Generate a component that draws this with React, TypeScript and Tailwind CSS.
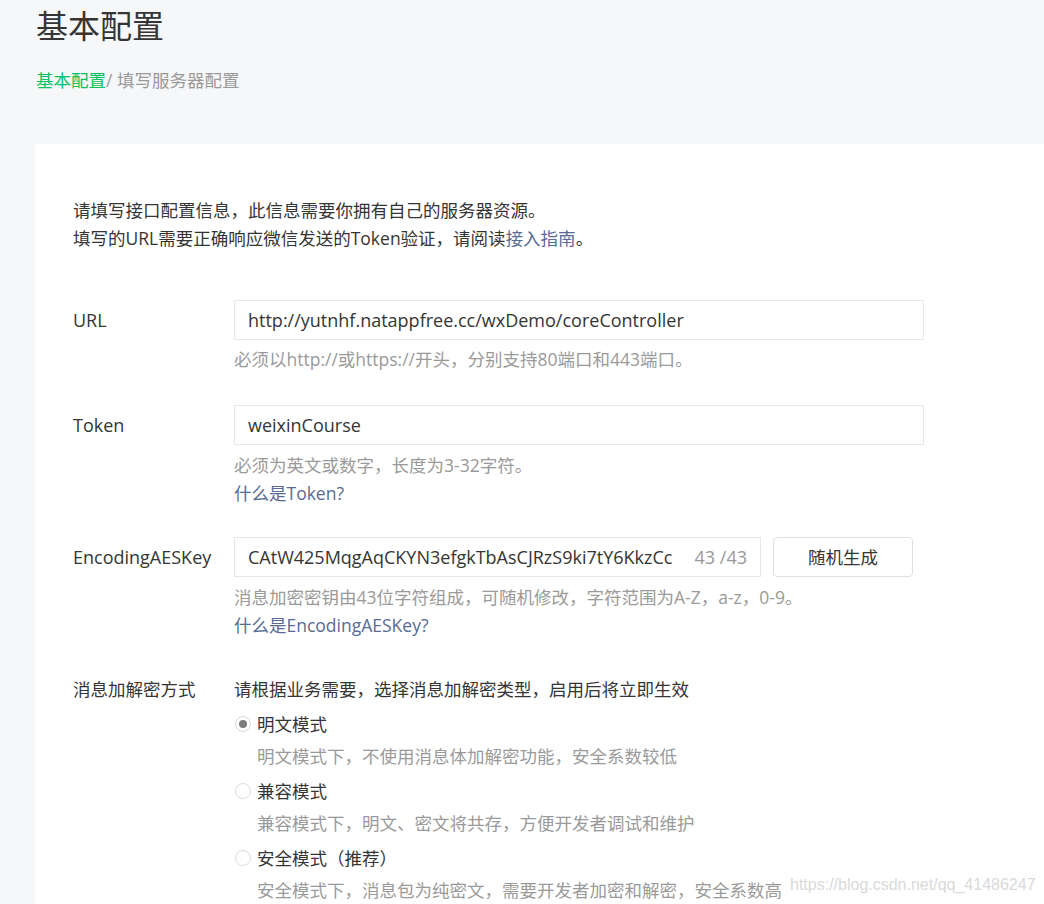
import { useState } from "react";

const font = { fontFamily: '"Open Sans", "Noto Sans CJK SC", sans-serif' };

type RadioOption = {
  label: string;
  desc: string;
};

const options: RadioOption[] = [
  { label: "明文模式", desc: "明文模式下，不使用消息体加解密功能，安全系数较低" },
  { label: "兼容模式", desc: "兼容模式下，明文、密文将共存，方便开发者调试和维护" },
  { label: "安全模式（推荐）", desc: "安全模式下，消息包为纯密文，需要开发者加密和解密，安全系数高" },
];

function Radio({ checked }: { checked: boolean }) {
  return (
    <span className="flex h-4 w-4 shrink-0 items-center justify-center rounded-full border border-[#dcdcdc] bg-white">
      {checked && <span className="h-2 w-2 rounded-full bg-[#7d7d7d]" />}
    </span>
  );
}

export default function App() {
  const [mode, setMode] = useState(0);

  return (
    <div
      className="relative h-[904px] w-full overflow-hidden bg-[#f6f7f9] text-[17.5px] text-[#353535]"
      style={font}
    >
      <div className="pl-9 pt-1">
        <h1 className="text-[32px] font-normal leading-[44px] text-[#353535]">基本配置</h1>
        <div className="mt-[18px] leading-7">
          <span className="text-[#07c160]">基本配置</span>
          <span className="text-[#9a9a9a]">/ 填写服务器配置</span>
        </div>
      </div>

      <div className="ml-[35px] mt-[50px] w-[1100px] rounded bg-white pb-20 pl-[38px] pt-[52px]">
        <div className="leading-7">
          <p>请填写接口配置信息，此信息需要你拥有自己的服务器资源。</p>
          <p>
            填写的URL需要正确响应微信发送的Token验证，请阅读
            <a href="#" className="text-[#576b95]">接入指南</a>。
          </p>
        </div>

        {/* URL */}
        <div className="mt-12 flex">
          <label className="w-[161px] shrink-0 text-[18px] leading-10">URL</label>
          <div>
            <div className="flex h-10 w-[690px] items-center border border-[#e7e7e7] px-[13px] text-[18px]">
              http://yutnhf.natappfree.cc/wxDemo/coreController
            </div>
            <p className="mt-[5px] leading-7 text-[#9a9a9a]">
              必须以http://或https://开头，分别支持80端口和443端口。
            </p>
          </div>
        </div>

        {/* Token */}
        <div className="mt-8 flex">
          <label className="w-[161px] shrink-0 text-[18px] leading-10">Token</label>
          <div>
            <div className="flex h-10 w-[690px] items-center border border-[#e7e7e7] px-[13px] text-[18px]">
              weixinCourse
            </div>
            <p className="mt-[6px] leading-7 text-[#9a9a9a]">必须为英文或数字，长度为3-32字符。</p>
            <a href="#" className="block leading-7 text-[#576b95]">什么是Token?</a>
          </div>
        </div>

        {/* EncodingAESKey */}
        <div className="mt-[30px] flex">
          <label className="w-[161px] shrink-0 text-[18px] leading-10">EncodingAESKey</label>
          <div>
            <div className="flex items-center gap-3">
              <div className="flex h-10 w-[527px] items-center border border-[#e7e7e7] pl-[13px] pr-[13px] text-[18px]">
                <span className="flex-1 overflow-hidden whitespace-nowrap">
                  CAtW425MqgAqCKYN3efgkTbAsCJRzS9ki7tY6KkzCc
                </span>
                <span className="ml-1 shrink-0 text-[#9a9a9a]">43 /43</span>
              </div>
              <button className="h-10 w-[140px] rounded border border-[#e0e0e0] bg-white text-[#353535]">
                随机生成
              </button>
            </div>
            <p className="mt-[6px] leading-7 text-[#9a9a9a]">
              消息加密密钥由43位字符组成，可随机修改，字符范围为A-Z，a-z，0-9。
            </p>
            <a href="#" className="block leading-7 text-[#576b95]">什么是EncodingAESKey?</a>
          </div>
        </div>

        {/* 消息加解密方式 */}
        <div className="mt-9 flex">
          <label className="w-[161px] shrink-0 leading-7">消息加解密方式</label>
          <div>
            <p className="leading-7">请根据业务需要，选择消息加解密类型，启用后将立即生效</p>
            {options.map((o, i) => (
              <div key={o.label} className="mt-[7px]">
                <div
                  className="flex cursor-pointer items-center gap-[6px] leading-7"
                  onClick={() => setMode(i)}
                >
                  <span className="ml-px">
                    <Radio checked={mode === i} />
                  </span>
                  <span>{o.label}</span>
                </div>
                <p className="ml-[23px] mt-1 leading-7 text-[#9a9a9a]">{o.desc}</p>
              </div>
            ))}
          </div>
        </div>
      </div>

      <div
        className="absolute bottom-[7px] left-[790px] text-[16px] text-[#d9d9d9]"
        style={{ fontFamily: '"Liberation Sans", Arial, sans-serif' }}
      >
        https://blog.csdn.net/qq_41486247
      </div>
    </div>
  );
}
